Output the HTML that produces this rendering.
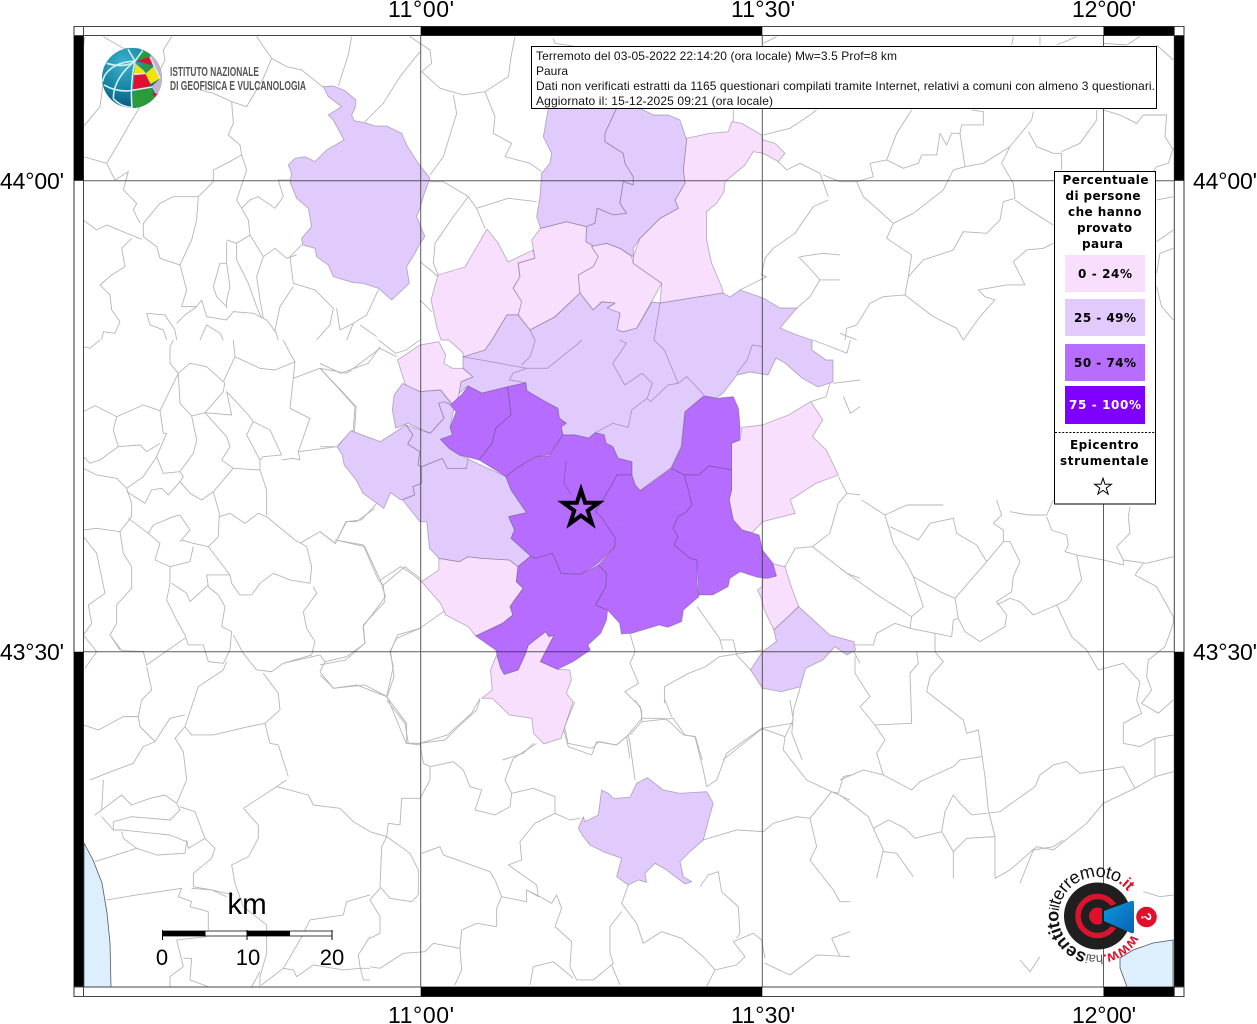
<!DOCTYPE html>
<html><head><meta charset="utf-8"><title>Terremoto</title>
<style>
html,body{margin:0;padding:0;background:#fff}
svg{display:block}
path,polygon,polyline,rect,line{vector-effect:non-scaling-stroke}
.g path{fill:none;stroke:#b6b6b6;stroke-width:.9;stroke-linejoin:round}
.p polygon{stroke:#4a3a5c;stroke-opacity:.36;stroke-width:.9;stroke-linejoin:round}
.i path{fill:none;stroke:#4a3a5c;stroke-opacity:.36;stroke-width:.9}
.lab{font:23px "Liberation Sans",sans-serif;fill:#000}
.inf{font:12px "Liberation Sans",sans-serif;fill:#111}
.leg{font:bold 12px "DejaVu Sans",sans-serif;fill:#000}
</style></head><body>
<svg width="1257" height="1024" viewBox="0 0 1257 1024" xmlns="http://www.w3.org/2000/svg">
<defs>
<clipPath id="c"><rect x="83.5" y="35.5" width="1090.8" height="951.5"/></clipPath>
<clipPath id="s"><circle cx="396" cy="234" r="90"/></clipPath>
<radialGradient id="b" cx=".35" cy=".25" r=".85"><stop offset="0" stop-color="#3bb2cf"/><stop offset=".55" stop-color="#14809f"/><stop offset="1" stop-color="#0a4d74"/></radialGradient>
<linearGradient id="cone" x1="0" x2="1" y1="0" y2="1"><stop offset="0" stop-color="#0a9ae0"/><stop offset="1" stop-color="#0a60b0"/></linearGradient>
</defs>
<rect width="1257" height="1024" fill="#fff"/>
<g clip-path="url(#c)">
<polygon points="84,843 93,860 102,883 107,913 110,943 111,987 84,987" fill="#ddeefc" stroke="#556" stroke-width=".8"/>
<polygon points="1173,940 1153,943 1133,950 1120,958 1120,968 1127,987 1173,987" fill="#ddeefc" stroke="#556" stroke-width=".8"/>

<g class="g">
<g transform="scale(.3333)"><path d="M255,110 250,140 M310,110 370,145 420,145 M515,110 490,150 495,180 480,210 M770,110 815,175 860,200 905,210 970,262 M1055,110 1045,165 1015,258 M1260,130 1230,110 M1260,155 1200,230 1150,310 1095,365 M815,175 790,235 740,320 695,305 640,280 600,270 M695,305 700,370 685,405 720,435 725,465 680,490 640,510 640,545 595,590 520,590 480,610 430,670 430,710 470,740 480,775 540,795 575,720 590,660 595,590 M420,320 390,370 350,440 320,490 250,470 M250,380 300,320 310,245 M320,490 345,540 385,515 370,570 410,610 400,630 420,670 M250,660 290,690 320,675 425,718 M725,465 740,510 710,600 725,625 745,660 750,705 790,770 770,830 780,900 790,955 M725,625 750,600 775,590 825,625 850,590 835,540 870,540 M905,735 870,770 880,850 945,870 1000,925 990,975 950,1020 M790,770 825,745 860,775 890,765 M880,860 840,920 825,990 835,1020 M395,715 365,745 375,800 335,825 300,855 330,885 335,930 360,965 345,1000 310,995 305,1020 M540,795 560,870 545,920 590,920 605,900 620,950 680,960 700,935 760,940 800,960 830,1000 M680,790 660,790 640,860 650,890 680,920 M680,725 680,790 690,860 680,900 680,925 M680,720 710,730 750,705 M710,730 710,780 745,850 770,920 785,955 M1135,870 1100,945 1060,970 1040,1020 M1080,975 1130,1010 M1010,925 1020,990 1060,970 M440,940 495,945 525,990 530,1020 M440,940 450,975 490,990 500,1020 M590,920 555,945 530,970 M600,1020 620,975 660,1000 670,1020"/></g>
<g transform="translate(420 0) scale(.3333)"><path d="M0,130 30,150 35,190 5,215 60,265 130,285 195,275 265,230 275,160 285,110 M100,285 110,340 70,470 30,525 M195,275 225,350 220,400 275,430 255,470 330,490 365,515 M30,545 70,545 145,590 170,625 265,595 350,605 M145,590 100,650 45,730 40,790 55,825 M170,625 195,685 M0,785 55,830 M0,900 35,935 M400,115 405,130 470,140 M1030,130 1070,110 M1030,405 1110,385 1170,345 1190,330 M940,330 940,370 M1075,485 1100,510 1140,490 1200,520 1225,590 M1260,545 1210,525 M1225,600 1180,620 1125,700 1060,745 1035,775 1025,825 1040,830 960,870 M1135,770 1165,800 1200,840 1170,890 1130,925 M1260,765 1210,760 1140,770 M1260,840 1200,840"/></g>
<g transform="translate(840 0) scale(.3333)"><path d="M215,330 170,400 140,480 90,490 100,530 50,545 M140,480 190,505 235,490 245,465 290,465 300,400 320,435 335,400 360,400 365,375 430,375 430,335 395,330 M360,400 375,500 430,490 510,440 555,385 575,360 580,335 M375,500 340,510 310,570 220,640 160,670 140,715 215,765 205,830 195,885 130,890 90,910 50,975 20,985 15,1020 M0,545 50,545 70,590 160,670 M205,830 250,780 340,750 370,695 440,700 480,660 490,605 525,595 520,550 485,490 510,440 M525,600 560,625 640,675 M195,885 280,950 350,985 370,1020 M415,870 500,855 555,855 520,785 560,750 610,745 640,730 M415,870 435,890 465,900 420,950 370,1020 M565,395 590,440 640,460 665,460 665,510 M790,330 840,345 890,370 910,345 980,345 975,410 1000,450 M665,455 720,430 770,360 770,330 M1000,445 985,490 950,500 940,515 M950,600 1000,590 M950,725 1000,690 M950,820 960,760 1000,745 M950,860 965,920 1000,960 M520,110 515,135 M600,110 600,135 M650,135 710,110 M790,130 860,135 900,110 M950,135 1000,180 M0,1000 50,1020"/></g>
<g transform="translate(320 340) scale(.3444 .3333)"><path d="M0,70 60,100 140,70 175,20 M0,85 60,150 105,200 100,275 M170,0 220,40 250,30 290,0 M0,320 50,320 M0,575 45,610 75,545 120,540 165,490 M45,600 130,620 175,720 235,680 265,700 295,725 M175,720 190,770 125,860 130,910 75,960 0,975 M290,865 225,885 205,935 215,1010 195,1070 250,1210 290,1210 M365,810 290,865 M0,1005 40,1045 130,1035 195,1070 M290,1210 370,1185 440,1120 465,1075 M900,880 915,935 900,970 925,1030 885,1055 930,1100 935,1135 1000,1135 1020,1150 1055,1185 1090,1190 1110,1260 M1000,1090 1000,1040 1070,1000 1120,980 1160,950 1285,930 M1095,800 1160,895 1170,930 M1160,900 1200,900 1210,945 1250,990 M740,1085 710,1160 720,1210 790,1225 810,1205 860,1215 890,1190 900,1255 M935,1135 890,1190 M620,1210 590,1240 530,1260 M1395,1040 1375,1110 1370,1180 1400,1260 M1370,1150 1285,1165 1170,1260 M1550,935 1568,970 M1490,130 1568,120 M1480,130 1470,170 1425,185 M1505,410 1530,460 1505,490 1480,580 1430,620 1380,625 1350,680 M1430,620 1530,700 1568,715 M1530,460 1568,465 M1540,0 1530,40 1470,15 1430,0 M1520,170 1540,220 1568,200"/></g>
<g transform="translate(1020 840) scale(.3333)"><path d="M0,130 40,30 100,20 130,0 M0,360 30,395 60,350 M370,155 420,170 460,165"/></g>
<g transform="translate(70 780) scale(.3333)"><path d="M100,0 95,90 75,105 155,45 185,75 240,55 285,45 320,70 350,0 M95,110 130,150 160,150 250,160 300,165 350,185 345,220 260,225 200,205 160,175 155,155 M130,150 130,125 185,110 300,120 330,90 320,70 M330,80 375,95 405,175 355,205 350,180 M405,175 435,205 425,235 370,280 370,320 425,330 490,345 M200,205 75,245 M110,360 200,345 335,325 325,350 365,365 360,380 415,395 415,450 M365,325 425,330 470,350 M520,85 565,135 565,175 535,230 485,255 495,310 520,380 590,435 590,520 570,590 570,620 M520,85 620,20 650,0 M620,20 715,45 730,75 810,85 850,125 900,155 M320,480 410,470 M320,480 340,560 M340,535 365,535 360,600 415,620 M340,560 300,590 300,620 M545,620 570,575 M900,345 830,365 820,405 720,420 690,480 640,565 575,615 M640,565 670,570 680,590 730,555 820,570 870,565 900,565 M870,560 865,525 900,470 M870,560 880,600 900,600"/></g>
<g transform="translate(0 340) scale(.3333)"><path d="M250,215 285,197 350,230 340,270 355,320 300,360 270,370 250,350 M350,230 430,195 480,212 535,100 510,70 510,20 520,0 M480,212 490,280 500,280 470,350 M355,320 420,315 440,335 480,310 M535,100 570,70 620,80 670,125 705,50 700,0 M705,50 780,85 825,90 885,65 870,40 850,0 M535,100 540,190 575,228 615,218 670,155 675,125 M615,218 695,225 680,155 745,225 760,245 740,285 780,360 790,350 845,345 810,270 760,245 M575,228 590,300 580,340 540,395 490,400 470,350 M615,218 680,290 690,320 665,360 700,385 780,390 M700,385 640,455 605,480 570,460 540,425 550,410 540,395 M250,385 290,405 350,415 380,445 395,490 395,530 360,575 290,565 250,570 M380,455 435,490 455,450 485,445 505,465 540,425 M380,445 430,410 470,350 M640,455 658,520 655,590 625,620 580,610 545,600 M658,530 690,520 735,550 775,520 800,530 885,600 920,620 935,680 930,730 870,720 820,700 780,730 755,765 720,765 695,730 690,705 620,705 625,740 655,765 675,800 665,860 695,875 690,930 M780,390 800,450 800,525 M780,360 780,390 M385,535 445,580 480,610 465,660 510,680 570,665 580,620 M445,580 460,555 520,530 540,525 570,570 540,605 M625,620 690,705 M510,680 510,730 500,780 530,840 555,885 565,915 610,915 625,965 670,970 690,930 M515,730 560,760 570,785 625,735 M360,575 370,640 395,680 395,745 350,795 350,850 330,885 360,930 M250,590 290,640 315,760 265,795 275,850 250,885 M250,885 290,935 255,985 M330,885 365,932 430,935 440,975 490,940 555,895 M900,610 960,575 1005,610 1040,545 1070,545 1125,505 M1005,600 1090,615 1135,720 1150,735 1215,680 1260,715 M1150,735 1155,785 1090,855 1095,910 1040,950 M940,740 950,760 910,815 920,865 945,905 935,945 850,970 815,995 770,990 730,940 700,885 M850,970 960,945 975,965 1040,950 M960,995 975,965 M960,995 1000,1045 1070,1035 1160,1070 1180,980 1170,935 1190,895 1260,865 M1160,1070 1220,1150 1220,1210 1260,1215 M790,1000 835,1060 840,1110 795,1150 745,1160 640,1185 575,1185 555,1160 595,1040 670,990 680,965 M795,1150 810,1210 835,1215 865,1310 M555,1125 510,1135 465,1205 420,1160 415,1130 370,1130 295,1170 250,1155 M415,1130 425,1080 455,1050 440,980 M465,1205 430,1220 400,1270 320,1300 270,1320 M555,1160 525,1195 550,1235 560,1320 M880,115 960,85 1020,150 1065,200 1060,270 1015,315 M880,115 870,205 930,235 895,335 1010,320 M895,335 900,360 880,355 845,360 M960,85 1040,100 1140,25 1190,50 M885,65 880,115 M250,20 270,25 300,0"/></g>
<g transform="translate(840 500) scale(.3333)"><path d="M65,0 135,45 160,130 200,190 220,230 300,275 345,295 355,355 340,360 335,410 285,400 210,385 165,370 110,400 100,435 45,435 M135,45 200,15 310,15 M150,80 235,120 270,70 340,55 350,100 410,135 440,185 M345,295 440,185 490,125 510,125 540,185 520,230 515,275 470,305 500,345 495,380 420,425 375,395 355,355 M470,0 485,45 460,70 490,90 490,125 M510,35 565,45 620,45 640,0 M620,50 635,90 680,105 685,135 675,155 710,165 725,240 680,300 650,315 580,345 540,305 510,295 470,315 M650,315 695,410 740,450 775,510 850,490 900,545 890,600 905,640 850,670 850,730 900,740 945,715 945,830 885,865 790,910 740,970 640,1050 590,1040 510,1110 465,1135 M710,165 790,180 850,195 850,180 920,190 1000,170 M850,180 830,140 870,100 865,50 870,20 M885,225 910,190 M885,225 950,260 1000,350 1000,370 M1000,370 975,440 925,480 920,530 935,570 905,610 955,640 1000,600 M945,715 1000,705 M945,830 1000,815 M885,865 850,800 790,810 720,820 680,785 640,795 600,825 585,860 480,935 395,945 360,910 340,885 315,935 305,995 225,1015 195,985 145,960 100,985 85,950 0,885 M305,995 340,1055 340,1135 M340,1055 380,1015 465,1010 M100,985 130,1050 110,1135 M130,1055 170,1060 220,1130 M130,825 215,870 240,845 340,800 360,780 425,770 M130,825 110,760 135,720 105,675 215,670 210,520 235,490 230,455 M130,825 70,810 0,840 M105,675 60,620 90,590 45,520 45,470 M285,400 285,455 310,485 270,530 260,575 370,660 380,700 415,690 435,830 445,930 465,1010 465,1135 M0,205 85,265 120,290 215,350 250,320 220,230 M215,350 210,385"/></g>
<g transform="translate(370 700) scale(.3333)"><path d="M50,0 105,70 115,130 150,130 225,120 260,85 320,30 330,0 M150,130 160,190 180,200 250,185 280,210 300,260 335,270 315,330 375,345 420,320 425,280 490,265 555,290 555,340 495,370 450,425 455,480 415,495 500,555 505,590 470,570 470,605 395,590 375,540 360,515 220,465 210,440 155,460 M180,200 180,240 150,295 95,295 90,375 55,370 50,410 0,395 M50,410 35,440 30,560 60,595 125,605 145,585 145,510 120,460 50,410 M30,565 0,600 30,650 30,700 0,715 M500,130 430,175 405,240 425,280 M555,340 600,360 630,355 M580,85 595,140 665,165 680,125 740,135 775,105 780,130 795,240 M780,105 815,65 910,55 945,105 975,110 1000,210 1010,260 1040,240 1070,160 1175,85 1245,110 1240,150 1310,240 1385,275 1440,300 M795,0 815,30 815,65 M885,0 905,50 M1245,110 1270,60 1260,0 M1385,275 1320,355 1280,350 1210,370 1180,395 1100,390 1000,420 M1385,275 1405,280 1420,230 1440,225 M1320,355 1340,440 1320,480 1390,570 1410,605 1440,605 M775,555 755,610 800,670 820,730 875,695 935,715 1000,770 1035,810 1100,795 1125,770 1090,725 1150,700 1175,720 1185,775 M755,635 720,680 720,760 730,790 670,840 620,840 600,800 605,725 555,680 575,625 560,585 545,610 510,590 470,570 M990,560 1015,525 1045,515 1055,575 1105,620 1110,700 1100,715 M380,680 380,625 395,590 M380,680 320,670 275,690 270,745 190,730 165,755 100,760 30,805 0,800 M270,745 275,810 255,855 M480,855 490,800 550,785 610,835 M725,795 750,855 M1035,810 1010,860 M1185,790 1260,825 1340,765 1440,770 M1385,715 1440,695 M1385,715 1410,770"/></g>
</g>

<g class="p">
<!-- 0-24 -->
<g fill="#f8dffd">
<polygon points="487,229 498,243 508,262 533,250 535,258 518,263 520,277 513,288 522,302 518,315 507,315 492,340 485,350 463,357 463,353 449,340 441,340 437,328 431,300 438,275 465,267"/>
<polygon transform="translate(420 0) scale(.3333)" points="362,685 440,665 500,680 498,725 520,738 515,740 535,770 520,800 475,825 480,880 405,950 330,990 295,945 305,905 280,865 300,830 295,790 345,775 335,720"/>
<polygon transform="translate(420 0) scale(.3333)" points="520,738 560,730 600,745 635,770 640,790 725,850 695,905 650,985 610,995 590,990 600,940 560,925 585,910 545,905 520,930 480,880 475,825 520,800 535,770 515,740"/>
<polygon transform="translate(420 0) scale(.3333)" points="800,415 870,400 925,395 935,365 965,370 1025,405 1030,420 1065,430 1095,460 1075,485 1030,460 1000,455 975,495 915,545 912,575 890,610 860,635 860,720 875,790 905,860 910,880 720,910 725,850 640,790 640,770 660,715 720,655 775,625 765,600 795,550 790,510"/>
<polygon transform="translate(320 340) scale(.3444 .3333)" points="225,60 290,15 345,5 365,45 360,70 385,85 415,85 445,110 410,125 405,160 390,200 350,150 290,155 250,140"/>
<polygon transform="translate(320 340) scale(.3444 .3333)" points="1195,310 1220,300 1225,262 1285,255 1360,225 1425,185 1460,240 1430,290 1470,330 1505,405 1440,430 1365,480 1380,520 1285,545 1255,578 1225,570 1200,540 1188,480 1195,450 1195,390"/>
<polygon transform="translate(320 340) scale(.3444 .3333)" points="345,655 405,665 430,650 470,655 550,660 575,680 570,725 590,745 565,780 552,800 560,825 530,850 452,888 430,860 365,825 350,790 295,725 345,690"/>
<polygon transform="translate(320 340) scale(.3444 .3333)" points="513,945 525,985 535,1003 575,990 595,945 605,915 655,875 665,890 680,885 660,925 640,965 690,988 725,990 730,1020 715,1060 735,1085 700,1195 650,1212 620,1180 615,1135 550,1125 500,1075 470,1075 500,1050 495,990"/>
<polygon transform="translate(320 340) scale(.3444 .3333)" points="1310,670 1350,680 1370,745 1390,800 1350,840 1318,870 1290,810 1280,770 1270,750 1285,740 1285,715 1325,708"/>
</g>
<!-- 25-49 -->
<g fill="#e1cbfd">
<polygon transform="scale(.3333)" points="970,260 1000,258 1035,272 1068,300 1065,325 1055,345 1062,362 1095,368 1125,378 1160,378 1205,400 1220,435 1255,490 1290,535 1270,590 1260,625 1250,650 1275,710 1260,730 1245,760 1220,800 1228,850 1175,900 1135,865 1090,850 1060,848 1000,830 985,795 950,770 945,745 908,735 905,715 935,680 925,625 890,595 870,545 875,520 865,495 885,475 915,470 945,485 980,450 1032,420 1000,360 985,345 1025,320 985,290"/>
<polygon transform="translate(420 0) scale(.3333)" points="385,325 370,410 395,460 390,490 365,520 360,590 350,650 362,685 440,665 500,680 525,670 532,625 580,645 620,640 600,610 610,545 640,555 640,530 615,490 610,460 555,425 555,400 590,325"/>
<polygon transform="translate(420 0) scale(.3333)" points="590,325 555,400 555,425 610,460 615,490 640,530 640,555 610,545 600,610 620,640 580,645 532,625 525,670 500,680 498,725 520,738 560,730 600,745 640,770 640,745 660,715 720,655 775,625 765,600 795,550 790,510 800,420 780,360 745,345 700,345 660,325"/>
<polygon points="463,357 485,350 492,340 507,315 518,315 530,330 555,317 580,293 593,310 602,302 615,303 607,308 620,313 617,330 623,332 637,328 652,302 660,303 723,293 730,297 740,290 763,298 780,308 797,308 780,328 797,335 812,340 812,350 826,360 833,360 833,382 818,387 802,378 785,363 776,358 768,375 750,372 737,375 723,393 716,398 704,396 685,412 681,447 671,468 650,483 640,491 635,485 632,475 632,462 625,460 618,458 613,447 606,443 604,435 595,433 589,438 575,435 563,435 561,427 566,423 559,418 558,408 545,402 527,391 526,383 508,387 482,393 468,386 459,393 461,382 473,377 463,368"/>
<g transform="translate(320 340) scale(.3444 .3333)">
<polygon points="50,320 90,272 175,305 250,255 270,285 255,312 290,335 285,375 295,380 295,430 270,440 275,465 235,480 205,458 185,505 165,490 125,460 105,420 70,375 65,345"/>
<polygon points="295,380 355,355 370,385 425,385 425,355 540,410 555,450 600,518 548,530 565,570 555,595 612,648 575,680 550,660 470,655 430,650 405,665 345,655 318,625 310,545 290,545 240,480 275,465 270,440 295,430"/>
<polygon points="215,165 240,130 290,155 350,150 380,190 345,190 360,235 320,280 255,250 220,265 210,210"/>
<polygon points="360,185 390,200 378,262 385,285 350,298 375,325 405,345 430,355 425,385 370,385 355,355 295,380 285,375 290,335 255,312 270,285 250,255 320,280 360,235 345,190"/>
<polygon points="1390,800 1480,885 1550,905 1555,930 1530,945 1495,920 1460,960 1410,985 1395,1040 1340,1055 1285,1045 1250,990 1285,935 1325,905 1318,870"/>
</g>
<polygon transform="translate(370 700) scale(.3333)" points="625,385 640,350 645,365 685,345 695,270 715,280 730,295 780,292 800,250 832,233 880,270 930,280 1010,275 1030,310 1020,345 1000,420 960,455 930,485 940,530 965,545 945,552 890,510 855,490 825,520 830,547 805,540 775,555 740,530 755,475 700,455 660,435 640,410"/>
</g>
<g class="i">
<path transform="translate(320 340) scale(.3444 .3333)" d="M415,50 600,85 660,85 720,35 745,15 760,0 M600,85 560,100 550,120 597,128 M885,135 850,70 890,10 870,0 M885,135 935,100 965,130 950,175 905,210 895,262 850,250 800,278 M950,175 960,185 1010,135 1040,130 1065,110 1115,165 M1040,130 1000,30 970,0 M1285,20 1255,15 1240,60 1210,100 M625,0 610,50 585,75"/>
<path d="M530,330 535,340 M660,303 654,340"/>
</g>
<!-- 50-74 -->
<g fill="#b56cff" transform="translate(320 340) scale(.3444 .3333)">
<polygon points="430,138 470,160 545,140 555,225 510,265 500,310 462,360 405,345 375,325 350,298 385,285 378,262 395,215 378,195 410,165"/>
<polygon points="545,140 597,128 600,152 655,185 690,205 695,235 715,250 700,260 705,285 665,345 625,350 570,385 540,410 462,360 500,310 510,265 555,225"/>
<polygon points="540,410 570,385 628,350 665,348 705,285 740,285 780,295 800,278 825,285 830,310 850,320 865,355 885,360 905,365 905,405 862,405 850,430 800,515 820,535 858,595 855,622 805,672 755,703 700,700 675,640 625,655 612,648 555,595 565,570 548,530 600,518 555,450"/>
<polygon points="612,648 625,655 675,640 700,700 755,703 808,675 832,700 830,740 800,795 835,810 832,840 815,880 778,915 785,930 735,965 690,988 640,965 660,925 680,885 665,890 655,875 605,915 595,945 575,990 535,1003 525,985 510,930 452,888 530,850 560,825 552,800 565,780 590,745 570,725 575,680"/>
<polygon points="862,405 905,405 915,435 930,452 960,430 1020,385 1058,405 1070,450 1080,495 1065,515 1040,530 1025,565 1040,590 1028,615 1075,655 1095,660 1095,730 1100,770 1055,810 1050,845 1010,862 985,855 905,880 875,882 870,850 835,810 800,795 830,740 832,700 808,675 855,622 858,595 820,535 800,515 850,430"/>
<polygon points="1115,168 1150,175 1200,170 1215,205 1220,265 1218,300 1195,310 1195,390 1130,378 1100,405 1058,405 1020,385 1050,320 1060,215"/>
<polygon points="1058,405 1100,405 1130,378 1195,390 1195,450 1188,480 1200,540 1225,570 1275,585 1285,630 1315,670 1325,708 1300,715 1270,712 1220,695 1190,715 1185,740 1140,765 1100,765 1095,660 1075,655 1028,615 1040,590 1025,565 1040,530 1065,515 1080,495 1070,450"/>
</g>
<g class="i"><path transform="translate(320 340) scale(.3444 .3333)" d="M715,362 708,430 730,465"/></g>
</g>

<!-- grid -->
<path d="M420.7,36V987M762.3,36V987M1103.5,36V987M84,180.7H1174M84,651.7H1174" stroke="#333" stroke-opacity=".8" stroke-width="1" fill="none"/>
<polygon transform="translate(581 508.5) scale(.93)" points="0,-20 4.49,-6.18 19.02,-6.18 7.27,2.36 11.76,16.18 0,7.64 -11.76,16.18 -7.27,2.36 -19.02,-6.18 -4.49,-6.18" fill="none" stroke="#000" stroke-width="4"/>
</g>

<!-- frame -->
<rect x="74" y="26.5" width="1110" height="970" fill="none" stroke="#444" stroke-width="1.1"/>
<rect x="83.5" y="35.5" width="1090.8" height="951.5" fill="none" stroke="#444" stroke-width="1"/>
<path d="M74,35.5H83.5V180.7H74ZM74,651.7H83.5V987H74ZM1174.3,35.5H1184V180.7H1174.3ZM1174.3,651.7H1184V987H1174.3ZM420.7,26.5H762.3V35.5H420.7ZM1103.5,26.5H1174.3V35.5H1103.5ZM420.7,987H762.3V996.5H420.7ZM1103.5,987H1174.3V996.5H1103.5Z" fill="#000"/>
<path d="M74,35.5H83.5M1174.3,35.5H1184M74,987H83.5M1174.3,987H1184M83.5,26.5V35.5M1174.3,26.5V35.5M83.5,987V996.5M1174.3,987V996.5" stroke="#444" fill="none"/>

<!-- axis labels -->
<g class="lab">
<text x="388" y="17" textLength="66">11°00'</text><text x="731" y="17" textLength="64">11°30'</text><text x="1072" y="17" textLength="64">12°00'</text>
<text x="388" y="1023" textLength="66">11°00'</text><text x="731" y="1023" textLength="64">11°30'</text><text x="1072" y="1023" textLength="64">12°00'</text>
<text x="0" y="189" textLength="64">44°00'</text><text x="0" y="660" textLength="64">43°30'</text>
<text x="1193" y="189" textLength="64">44°00'</text><text x="1193" y="660" textLength="64">43°30'</text>
</g>

<!-- info box -->
<rect x="531.5" y="46.5" width="625" height="62" fill="#fff" stroke="#000" stroke-width="1"/>
<g class="inf">
<text x="536" y="60" textLength="361">Terremoto del 03-05-2022 22:14:20 (ora locale) Mw=3.5 Prof=8 km</text>
<text x="536" y="75" textLength="32">Paura</text>
<text x="536" y="90" textLength="619">Dati non verificati estratti da 1165 questionari compilati tramite Internet, relativi a comuni con almeno 3 questionari.</text>
<text x="536" y="105" textLength="237">Aggiornato il: 15-12-2025 09:21 (ora locale)</text>
</g>

<!-- legend -->
<rect x="1054.5" y="171.5" width="101" height="332.5" fill="#fff" stroke="#000" stroke-width="1"/>
<rect x="1065" y="255" width="80" height="37" fill="#f9dffd"/>
<rect x="1065" y="299" width="80" height="37" fill="#e2cafd"/>
<rect x="1065" y="344" width="80" height="37" fill="#b76eff"/>
<rect x="1065" y="386" width="80" height="38" fill="#7f00ff"/>
<path d="M1055,432.5H1155" stroke="#000" stroke-dasharray="2 1.6" fill="none"/>
<g class="leg">
<text x="1062.5" y="184" textLength="86">Percentuale</text>
<text x="1065.5" y="200" textLength="75">di persone</text>
<text x="1068" y="216" textLength="73.5">che hanno</text>
<text x="1077" y="232" textLength="55">provato</text>
<text x="1082" y="248" textLength="41">paura</text>
<text x="1078" y="278" textLength="54">0 - 24%</text>
<text x="1074" y="322" textLength="62">25 - 49%</text>
<text x="1074" y="367" textLength="62">50 - 74%</text>
<text x="1069" y="409" textLength="72" style="fill:#fff">75 - 100%</text>
<text x="1070" y="449" textLength="68.5">Epicentro</text>
<text x="1060" y="465" textLength="88.5">strumentale</text>
</g>
<polygon transform="translate(1103 487) scale(.44)" points="0,-20 4.49,-6.18 19.02,-6.18 7.27,2.36 11.76,16.18 0,7.64 -11.76,16.18 -7.27,2.36 -19.02,-6.18 -4.49,-6.18" fill="#fff" stroke="#000" stroke-width="1"/>

<!-- scale bar -->
<rect x="162.5" y="931" width="169.5" height="5" fill="#fff" stroke="#000" stroke-width=".8"/>
<rect x="162.5" y="931" width="43" height="5" fill="#000"/><rect x="247" y="931" width="43" height="5" fill="#000"/>
<path d="M162.5,930V940M247,930V940M332,930V940" stroke="#000" stroke-width="1" fill="none"/>
<g font-family="Liberation Sans,sans-serif" fill="#000" text-anchor="middle">
<text x="247" y="914" font-size="29.5">km</text>
<text x="162" y="965" font-size="22">0</text><text x="248" y="965" font-size="22">10</text><text x="332" y="965" font-size="22">20</text>
</g>

<!-- INGV logo -->
<g transform="scale(.3333)">
<circle cx="396" cy="234" r="90" fill="url(#b)"/>
<g clip-path="url(#s)">
<polygon points="408,180 430,150 452,165 450,172" fill="#2c9b3c"/>
<polygon points="408,184 450,170 456,196 430,188" fill="#e2102e"/>
<polygon points="430,190 456,196 442,216 424,200" fill="#2c9b3c"/>
<polygon points="406,190 432,212 436,220 402,224" fill="#f2e20c"/>
<polygon points="442,216 460,200 480,236 452,252 436,222" fill="#f2e20c"/>
<polygon points="404,224 436,220 452,258 400,270" fill="#e2102e"/>
<polygon points="400,270 454,262 466,294 430,325 392,325" fill="#2a9a3a"/>
<polygon points="452,165 490,170 490,300 470,288 454,260 480,236 460,200" fill="#c4b2c8"/>
<polygon points="458,282 474,280 466,294" fill="#e2102e"/>
<g fill="none" stroke="#d8eef4" stroke-width="1.6">
<path d="M405,183C360,185 315,205 308,245M405,183Q340,235 340,296M405,183Q390,250 396,324M405,183L384,148M405,183L428,152M320,190Q370,205 405,185M312,255Q355,280 402,270M340,296Q365,322 396,322M402,270L456,261M403,223L437,220M450,170L480,236"/>
</g>
</g>
</g>
<g font-family="Liberation Sans,sans-serif" font-weight="bold" font-size="13" fill="#555">
<text x="170" y="76" textLength="89" lengthAdjust="spacingAndGlyphs">ISTITUTO NAZIONALE</text>
<text x="170" y="90" textLength="136" lengthAdjust="spacingAndGlyphs">DI GEOFISICA E VULCANOLOGIA</text>
</g>

<!-- haisentito logo -->
<path id="arc" d="M1131.9,934.3A39,39 0 1 1 1131.9,897.7" fill="none"/>
<circle cx="1097.5" cy="916" r="33.5" fill="#1f1f1f"/>
<circle cx="1097.5" cy="916" r="19.5" fill="none" stroke="#d8142e" stroke-width="5.5"/>
<circle cx="1097.5" cy="916" r="8.5" fill="#e0102c"/>
<path d="M1102,909 1124,901 1124,931 1102,923Z" fill="#1f1f1f"/>
<path d="M1104,911 1131,901Q1134,900 1134,903L1134,931Q1134,934 1131,933L1104,921Z" fill="url(#cone)"/>
<circle cx="1146.5" cy="917" r="10.3" fill="#e0102c"/>
<text x="1146.5" y="922" font-family="Liberation Sans,sans-serif" font-weight="bold" font-size="14" fill="#fff" text-anchor="middle" transform="rotate(80 1146.5 917)">?</text>
<text font-family="Liberation Sans,sans-serif" font-size="18" fill="#111" letter-spacing="-.5"><textPath href="#arc"><tspan fill="#e0102c" font-weight="bold" font-size="15">www.</tspan><tspan font-size="13" fill="#555">hai</tspan><tspan font-weight="bold">sentito</tspan><tspan font-size="14">il</tspan><tspan>terremoto</tspan><tspan fill="#e0102c" font-weight="bold" font-size="16">.it</tspan></textPath></text>
</svg>
</body></html>
